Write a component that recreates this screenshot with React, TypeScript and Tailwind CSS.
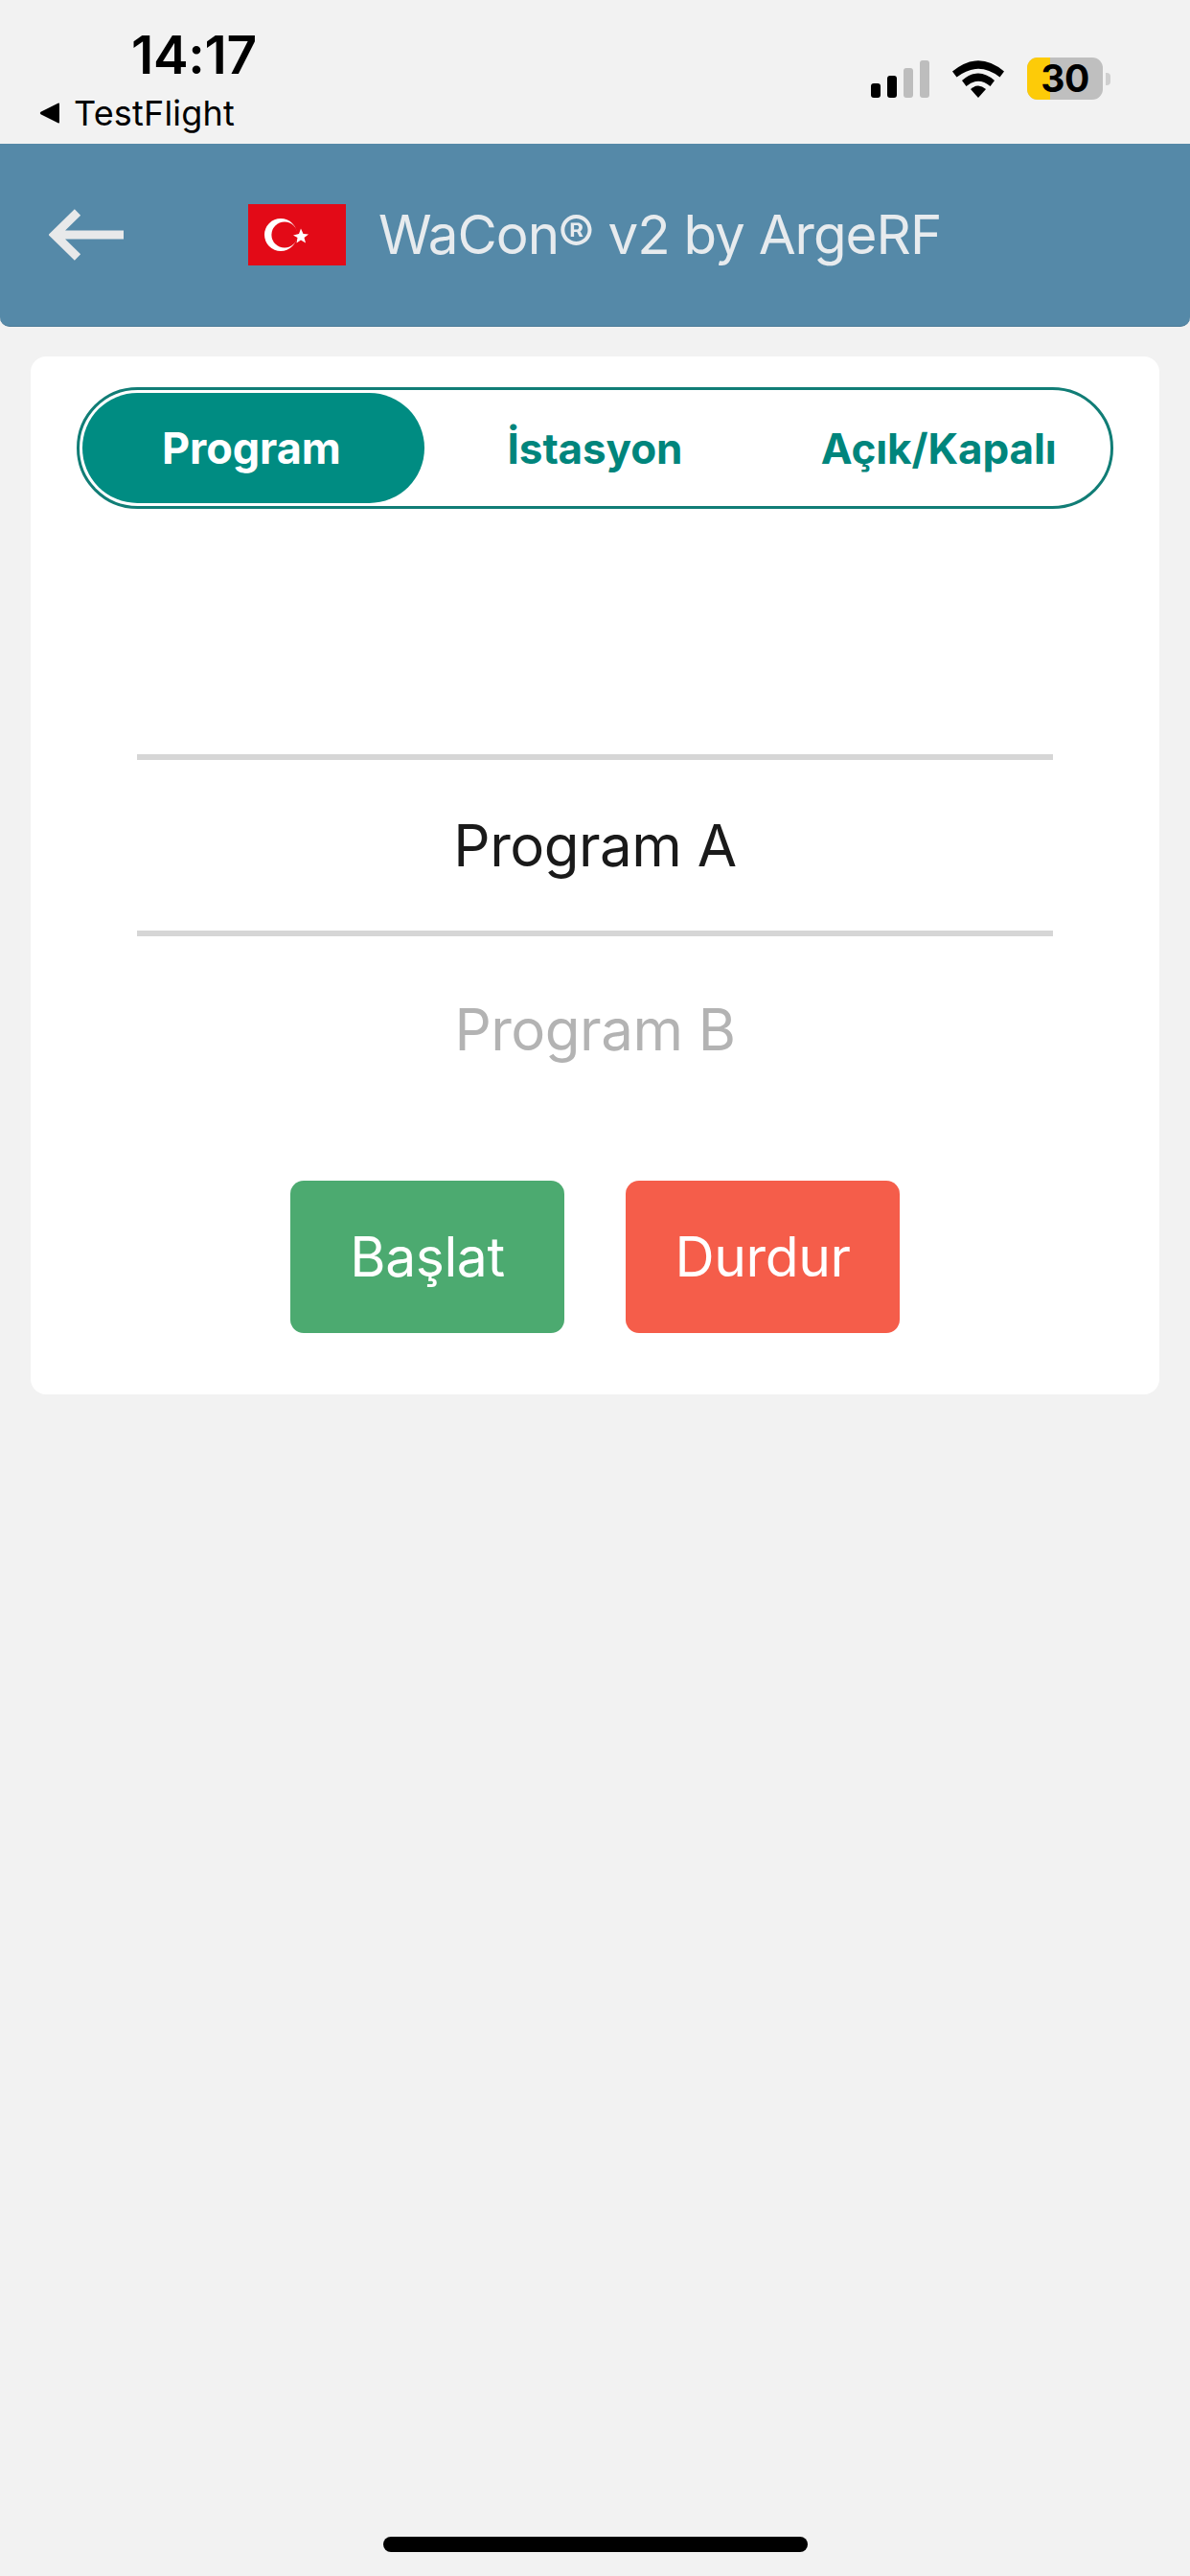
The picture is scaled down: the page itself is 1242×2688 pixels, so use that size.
const font = "font-['Inter','Liberation_Sans',sans-serif]"

function StatusBar() {
  return (
    <div className="h-[150px] flex justify-between">
      <div className="pl-[41px] pt-[29px]">
        <div className="pl-[96px] text-[55px] leading-[56px] font-semibold text-black tracking-[-0.3px]">14:17</div>
        <div className="flex items-center mt-[17px] h-[32px]">
          <svg width="22" height="22" viewBox="0 0 22 22">
            <path d="M21 1.5 V20.5 Q21 22 19.5 21.2 L1.5 12.2 Q0 11 1.5 9.8 L19.5 .8 Q21 0 21 1.5 Z" fill="#000" />
          </svg>
          <span className="ml-[14px] text-[36px] leading-[32px] text-black tracking-[0.2px]">TestFlight</span>
        </div>
      </div>
      <div className="flex items-start pt-[60px] pr-[83px]">
        <div className="flex items-end gap-[7px] h-[39px] mt-[3px]">
          <div className="w-[10px] h-[15px] rounded-[3px] bg-black" />
          <div className="w-[10px] h-[23px] rounded-[3px] bg-black" />
          <div className="w-[10px] h-[31px] rounded-[3px] bg-[#bdbdbd]" />
          <div className="w-[10px] h-[39px] rounded-[3px] bg-[#bdbdbd]" />
        </div>
        <svg className="ml-[24px] mt-[3px]" width="54" height="39" viewBox="0 0 54 39">
          <path d="M0 11.5 Q27 -11 54 11.5 L49.5 17.5 Q27 0 4.5 17.5 Z" fill="#000" />
          <path d="M10 21 Q27 6 44 21 L39.5 27 Q27 16.5 14.5 27 Z" fill="#000" />
          <path d="M19 30 Q27 23 35 30 L27 39 Z" fill="#000" />
        </svg>
        <div className="ml-[24px] relative w-[79px] h-[44px] rounded-[11px] bg-[#bfbfbf] flex items-center justify-center">
          <div className="absolute left-0 top-0 bottom-0 w-[24px] rounded-l-[11px] bg-[#fdcb08]" />
          <span className="relative text-[39px] leading-[44px] font-bold text-black tracking-[-0.5px]">30</span>
        </div>
        <div className="ml-[3px] mt-[16px] w-[5px] h-[13px] rounded-r-[4px] bg-[#cfcfcf]" />
      </div>
    </div>
  )
}

function Header() {
  return (
    <div className="h-[191px] bg-[#5589a8] rounded-b-[10px] flex items-center border-b border-[#4a7a97]">
      <svg className="ml-[51px]" width="78" height="54" viewBox="0 0 78 54">
        <path d="M78 27 H8 M30 3.5 L6 27 L30 50.5" fill="none" stroke="#e8e9ea" strokeWidth="9" />
      </svg>
      <svg className="ml-[130px]" width="102" height="64" viewBox="0 0 102 64">
        <rect width="102" height="64" fill="#e30a17" />
        <circle cx="34" cy="32" r="17" fill="#fff" />
        <circle cx="38" cy="32" r="13.6" fill="#e30a17" />
        <polygon points="47,32.5 53,31 55,25.5 57.5,31 63,31.5 58.5,35 60,40.5 55,37.5 50.5,40.5 51.5,35" fill="#fff" />
      </svg>
      <div className="ml-[34px] text-[56.5px] leading-[64px] text-[#e7ebee] tracking-[-1px]">WaCon® v2 by ArgeRF</div>
    </div>
  )
}

function Tabs() {
  return (
    <div className="mx-[48px] h-[127px] rounded-full border-[3px] border-[#117d76] p-[3px] grid grid-cols-3 text-[44px] leading-[52px] font-bold tracking-[-0.1px]">
      <div className="rounded-full bg-[#008c82] text-white flex items-center justify-center pr-[4px] text-[45px]">Program</div>
      <div className="text-[#00857c] flex items-center justify-center">İstasyon</div>
      <div className="text-[#00857c] flex items-center justify-center whitespace-nowrap pl-[4px]">Açık/Kapalı</div>
    </div>
  )
}

function Picker() {
  return (
    <div className="mt-[256px] mx-[111px] text-center text-[60px] leading-[72px] tracking-[-0.5px]">
      <div className="h-[6px] bg-[#d6d6d6]" />
      <div className="h-[178px] flex items-center justify-center text-[#1a1a1a]">Program A</div>
      <div className="h-[6px] bg-[#d6d6d6]" />
      <div className="h-[194px] flex items-center justify-center text-[#b3b3b3]">Program B</div>
    </div>
  )
}

function Buttons() {
  return (
    <div className="mt-[61px] flex justify-center gap-[64px] text-[57px] leading-[64px] text-white tracking-[-0.4px]">
      <button className="w-[286px] h-[159px] rounded-[14px] bg-[#4caa70]">Başlat</button>
      <button className="w-[286px] h-[159px] rounded-[14px] bg-[#f55d4a]">Durdur</button>
    </div>
  )
}

export default function App() {
  return (
    <div className={`${font} relative w-[1242px] h-[2688px] bg-[#f2f2f2] overflow-hidden`}>
      <StatusBar />
      <Header />
      <div className="mx-[32px] mt-[31px] h-[1083px] rounded-[16px] bg-white pt-[32px]">
        <Tabs />
        <Picker />
        <Buttons />
      </div>
      <div className="absolute left-[400px] top-[2647px] w-[443px] h-[16px] rounded-full bg-black" />
    </div>
  )
}
